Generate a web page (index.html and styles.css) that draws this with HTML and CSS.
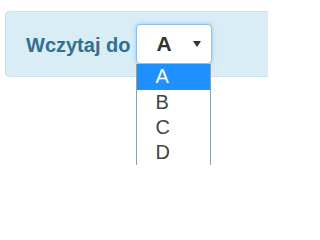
FILE: index.html
```html
<!DOCTYPE html>
<html lang="pl">
<head>
<meta charset="utf-8">
<link rel="stylesheet" href="styles.css">
</head>
<body>
<div class="panel">
  <span class="label">Wczytaj do</span>
  <div class="select-wrap">
    <div class="select">
      <span class="value">A</span>
      <span class="arrow"></span>
    </div>
    <ul class="list">
      <li class="item active">A</li>
      <li class="item">B</li>
      <li class="item">C</li>
      <li class="item">D</li>
    </ul>
  </div>
</div>
</body>
</html>
```
FILE: styles.css
```css
html, body {
  margin: 0;
  padding: 0;
  background: #fff;
  width: 268px;
  height: 202px;
  overflow: hidden;
}
body {
  box-sizing: border-box;
  padding: 11px 0 0 5px;
  font-family: "Liberation Sans", Arial, sans-serif;
}
.panel {
  width: 290px;
  height: 66px;
  box-sizing: border-box;
  background: #d9edf7;
  border: 1px solid #c8e3f0;
  border-radius: 4px;
  display: flex;
  align-items: flex-start;
  padding: 12px 0 0 20px;
}
.label {
  font-size: 20px;
  font-weight: bold;
  color: #31708f;
  margin-top: 10px;
  margin-right: 6px;
}
.select-wrap {
  position: relative;
  width: 76px;
}
.select {
  height: 40px;
  box-sizing: border-box;
  background: #fff;
  border: 1px solid #8fbfe6;
  border-radius: 4px;
  box-shadow: 0 0 4px rgba(102, 175, 233, 0.6);
  display: flex;
  align-items: center;
  padding-left: 19px;
  padding-right: 10px;
}
.value {
  flex: 1;
  font-size: 21px;
  font-weight: bold;
  color: #333;
}
.arrow {
  width: 0;
  height: 0;
  border-left: 4px solid transparent;
  border-right: 4px solid transparent;
  border-top: 6px solid #333;
}
.list {
  position: absolute;
  top: 40px;
  left: 0;
  width: 75px;
  box-sizing: border-box;
  margin: 0;
  padding: 0;
  list-style: none;
  background: #fff;
  border-left: 1px solid #8a9fb8;
  border-right: 1px solid #8a9fb8;
}
.item {
  height: 25px;
  line-height: 25px;
  padding-left: 18px;
  font-size: 20px;
  color: #444;
}
.item.active {
  background: #1e90ff;
  color: #fff;
  height: 26px;
}
```
